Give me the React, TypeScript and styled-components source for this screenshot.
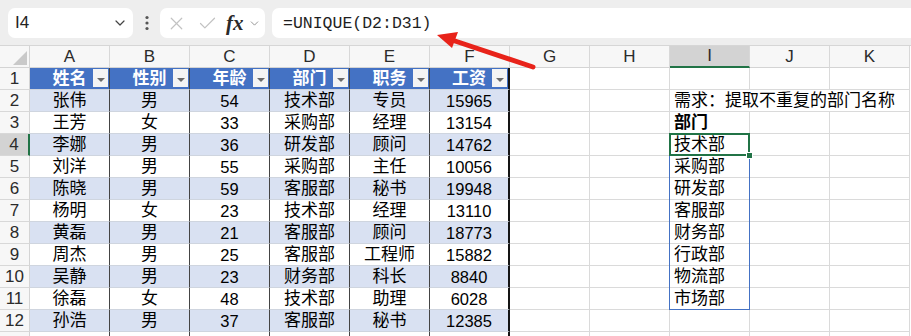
import React from 'react';
import styled, { createGlobalStyle } from 'styled-components';
import { ChevronDown, X, Check } from 'lucide-react';

const GlobalStyle = createGlobalStyle`
  html, body { margin: 0; padding: 0; background: #ffffff; }
  body { overflow: hidden; }
`;

const FONT = `"Liberation Sans", "Noto Sans CJK SC", sans-serif`;

const COL_W = 80;
const ROW_H = 22;
const ROWHEAD_W = 30;
const SHEET_TOP = 46 + ROW_H;

const Page = styled.div`
  position: relative;
  width: 911px;
  height: 336px;
  overflow: hidden;
  font-family: ${FONT};
  color: #000;
  background: #fff;
`;

const FormulaBar = styled.div`
  box-sizing: border-box;
  height: 46px;
  display: flex;
  align-items: flex-start;
  padding: 8px 0 0 8px;
  background: #eeeeee;
  border-bottom: 1px solid #d6d6d6;
`;

const NameBox = styled.div`
  box-sizing: border-box;
  width: 125px;
  height: 30px;
  display: flex;
  align-items: center;
  justify-content: space-between;
  padding: 0 5px 0 7px;
  background: #fff;
  border-radius: 7px;
  font-size: 17px;
  color: #222;
`;

const Dots = styled.div`
  width: 27px;
  height: 30px;
  display: flex;
  align-items: center;
  justify-content: center;
`;

const FxBox = styled.div`
  box-sizing: border-box;
  width: 105px;
  height: 30px;
  display: flex;
  align-items: center;
  gap: 10px;
  padding-left: 6px;
  background: #fff;
  border-radius: 7px;
`;

const FxLabel = styled.span`
  font-family: "Liberation Serif", "DejaVu Serif", serif;
  font-style: italic;
  font-weight: 700;
  font-size: 21px;
  color: #2a2a2a;
  margin-left: -2px;
  margin-right: -6px;
`;

const FormulaInput = styled.div`
  box-sizing: border-box;
  flex: 1;
  height: 30px;
  margin-left: 7px;
  display: flex;
  align-items: center;
  padding-left: 11px;
  background: #fff;
  border-radius: 7px 0 0 7px;
  font-family: "Liberation Mono", "DejaVu Sans Mono", monospace;
  font-size: 16.5px;
  color: #1e1e1e;
`;

const Sheet = styled.div`
  display: grid;
  grid-template-columns: ${ROWHEAD_W}px repeat(11, ${COL_W}px);
  grid-auto-rows: ${ROW_H}px;
`;

const Corner = styled.div`
  position: relative;
  box-sizing: border-box;
  background: #f7f7f7;
  border-right: 1px solid #d4d4d4;
  border-bottom: 1px solid #d4d4d4;
  &::after {
    content: '';
    position: absolute;
    right: 2px;
    bottom: 2px;
    width: 0;
    height: 0;
    border-left: 14px solid transparent;
    border-bottom: 14px solid #c9c9c9;
  }
`;

const ColHeader = styled.div<{ $active?: boolean }>`
  box-sizing: border-box;
  display: flex;
  align-items: center;
  justify-content: center;
  font-size: 17px;
  color: #2b2b2b;
  background: ${p => (p.$active ? '#d3d3d3' : '#f7f7f7')};
  border-right: 1px solid #d8d8d8;
  border-bottom: ${p => (p.$active ? '2px solid #217346' : '1px solid #d4d4d4')};
`;

const RowHeader = styled.div<{ $active?: boolean }>`
  box-sizing: border-box;
  display: flex;
  align-items: center;
  justify-content: center;
  font-size: 17px;
  color: #2b2b2b;
  background: ${p => (p.$active ? '#d3d3d3' : '#f7f7f7')};
  border-right: ${p => (p.$active ? '2px solid #217346' : '1px solid #d4d4d4')};
  border-bottom: 1px solid #d8d8d8;
`;

type Tone = 'head' | 'band' | 'plain' | 'blank';

const Cell = styled.div<{
  $tone: Tone;
  $num?: boolean;
  $left?: boolean;
  $bold?: boolean;
  $edge?: boolean;
  $span?: number;
}>`
  position: relative;
  box-sizing: border-box;
  display: flex;
  align-items: center;
  justify-content: ${p => (p.$left ? 'flex-start' : 'center')};
  padding-left: ${p => (p.$left ? '4px' : '0')};
  white-space: nowrap;
  line-height: ${ROW_H}px;
  grid-column: ${p => (p.$span ? `span ${p.$span}` : 'auto')};
  font-size: ${p => (p.$num ? '16.5px' : '17px')};
  font-weight: ${p => (p.$bold || p.$tone === 'head' ? 700 : 400)};
  color: ${p => (p.$tone === 'head' ? '#ffffff' : '#000000')};
  background: ${p =>
    p.$tone === 'head' ? '#4472c4' : p.$tone === 'band' ? '#d9e1f2' : '#ffffff'};
  border-bottom: 1px solid ${p => (p.$tone === 'blank' ? '#dadada' : '#cfd5df')};
  border-right: ${p =>
    p.$edge ? '2px solid #151515' : p.$tone === 'blank' ? '1px solid #dadada' : '1px solid #444444'};
`;

const FilterButton = styled.span`
  position: absolute;
  right: 1px;
  top: 1px;
  bottom: 2px;
  width: 15px;
  background: #f4f4f4;
  &::after {
    content: '';
    position: absolute;
    left: 4px;
    top: 9px;
    border-left: 4px solid transparent;
    border-right: 4px solid transparent;
    border-top: 4px solid #6a6a6a;
  }
`;

const SpillOutline = styled.div`
  position: absolute;
  box-sizing: border-box;
  border: 1px solid #4472c4;
  pointer-events: none;
`;

const ActiveOutline = styled.div`
  position: absolute;
  box-sizing: border-box;
  border: 2px solid #217346;
  pointer-events: none;
`;

const FillHandle = styled.div`
  position: absolute;
  right: -5px;
  bottom: -5px;
  width: 7px;
  height: 7px;
  background: #217346;
  border: 1px solid #fff;
  box-sizing: border-box;
`;

const ArrowLayer = styled.svg`
  position: absolute;
  left: 0;
  top: 0;
  pointer-events: none;
`;

const COLS = ['A', 'B', 'C', 'D', 'E', 'F', 'G', 'H', 'I', 'J', 'K'];
const HEADERS = ['姓名', '性别', '年龄', '部门', '职务', '工资'];
const DATA: string[][] = [
  ['张伟', '男', '54', '技术部', '专员', '15965'],
  ['王芳', '女', '33', '采购部', '经理', '13154'],
  ['李娜', '男', '36', '研发部', '顾问', '14762'],
  ['刘洋', '男', '55', '采购部', '主任', '10056'],
  ['陈晓', '男', '59', '客服部', '秘书', '19948'],
  ['杨明', '女', '23', '技术部', '经理', '13110'],
  ['黄磊', '男', '21', '客服部', '顾问', '18773'],
  ['周杰', '男', '25', '客服部', '工程师', '15882'],
  ['吴静', '男', '23', '财务部', '科长', '8840'],
  ['徐磊', '女', '48', '技术部', '助理', '6028'],
  ['孙浩', '男', '37', '客服部', '秘书', '12385'],
];
const UNIQUE = ['技术部', '采购部', '研发部', '客服部', '财务部', '行政部', '物流部', '市场部'];
const VISIBLE_ROWS = 12;

const isNum = (s: string) => /^\d+$/.test(s);

function SheetRow({ n }: { n: number }) {
  const cells: React.ReactNode[] = [];
  cells.push(
    <RowHeader key="rh" $active={n === 4}>
      {n <= VISIBLE_ROWS ? n : ''}
    </RowHeader>
  );
  if (n === 1) {
    HEADERS.forEach((h, i) => {
      cells.push(
        <Cell key={`t${i}`} $tone="head" $edge={i === 5}>
          {h}
          <FilterButton />
        </Cell>
      );
    });
  } else {
    const row = DATA[n - 2];
    const tone: Tone = n % 2 === 0 ? 'band' : 'plain';
    for (let i = 0; i < 6; i++) {
      const v = row ? row[i] : '';
      cells.push(
        <Cell key={`t${i}`} $tone={tone} $num={isNum(v)} $edge={i === 5}>
          {v}
        </Cell>
      );
    }
  }
  cells.push(<Cell key="g" $tone="blank" />);
  cells.push(<Cell key="h" $tone="blank" />);
  if (n === 2) {
    cells.push(
      <Cell key="i" $tone="blank" $left $span={3}>
        需求：提取不重复的部门名称
      </Cell>
    );
  } else {
    let text = '';
    if (n === 3) text = '部门';
    if (n >= 4 && n <= 11) text = UNIQUE[n - 4];
    cells.push(
      <Cell key="i" $tone="blank" $left $bold={n === 3}>
        {text}
      </Cell>
    );
    cells.push(<Cell key="j" $tone="blank" />);
    cells.push(<Cell key="k" $tone="blank" />);
  }
  return <>{cells}</>;
}

export default function App() {
  const iLeft = ROWHEAD_W + 8 * COL_W;
  const r4Top = SHEET_TOP + 3 * ROW_H;
  return (
    <Page>
      <GlobalStyle />
      <FormulaBar>
        <NameBox>
          <span>I4</span>
          <ChevronDown size={16} color="#444" strokeWidth={1.8} />
        </NameBox>
        <Dots>
          <svg width="4" height="16" viewBox="0 0 4 16">
            <circle cx="2" cy="2.5" r="1.6" fill="#555" />
            <circle cx="2" cy="8" r="1.6" fill="#555" />
            <circle cx="2" cy="13.5" r="1.6" fill="#555" />
          </svg>
        </Dots>
        <FxBox>
          <X size={21} color="#c2c2c2" strokeWidth={1.4} />
          <Check size={21} color="#c2c2c2" strokeWidth={1.4} />
          <FxLabel>fx</FxLabel>
          <ChevronDown size={13} color="#888" strokeWidth={1.6} />
        </FxBox>
        <FormulaInput>=UNIQUE(D2:D31)</FormulaInput>
      </FormulaBar>
      <Sheet>
        <Corner />
        {COLS.map(c => (
          <ColHeader key={c} $active={c === 'I'}>
            {c}
          </ColHeader>
        ))}
        {Array.from({ length: 13 }, (_, i) => (
          <SheetRow key={i} n={i + 1} />
        ))}
      </Sheet>
      <SpillOutline
        style={{ left: iLeft - 1, top: r4Top - 1, width: COL_W + 1, height: 8 * ROW_H + 1 }}
      />
      <ActiveOutline style={{ left: iLeft - 1, top: r4Top - 1, width: COL_W + 1, height: ROW_H + 1 }}>
        <FillHandle />
      </ActiveOutline>
      <ArrowLayer width="911" height="336" viewBox="0 0 911 336">
        <line x1="533" y1="67" x2="452" y2="40" stroke="#e8231a" strokeWidth="5" strokeLinecap="round" />
        <polygon points="437,35 458,32 452,48" fill="#e8231a" />
      </ArrowLayer>
    </Page>
  );
}
